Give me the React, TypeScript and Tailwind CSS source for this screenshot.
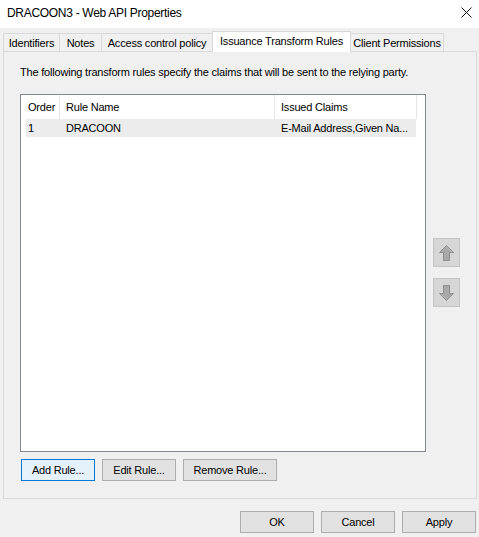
import React from "react";

const font = { fontFamily: '"Liberation Sans", Arial, sans-serif' };

function Btn({ label, w, primary }: { label: string; w: string; primary?: boolean }) {
  return (
    <div
      className={`${w} h-[22px] flex items-center justify-center border whitespace-nowrap ${
        primary ? "border-[#0078d7] bg-[#e5f1fb]" : "border-[#adadad] bg-[#e1e1e1]"
      } text-black`}
    >
      {label}
    </div>
  );
}

function Arrow({ up }: { up?: boolean }) {
  return (
    <div className="w-[27px] h-[29px] border border-[#c4c4c4] bg-[#d6d6d6] flex items-center justify-center">
      <svg width="17" height="18" viewBox="0 0 17 18" className={up ? "" : "rotate-180"}>
        <path
          d="M8.5 1.5 L15.5 8.5 L11.5 8.5 L11.5 16.5 L5.5 16.5 L5.5 8.5 L1.5 8.5 Z"
          fill="#a8a8a8"
          stroke="#8e8e8e"
          strokeWidth="1"
          strokeLinejoin="miter"
        />
        <path d="M8.5 3 L14 8" stroke="#bcbcbc" strokeWidth="1" fill="none" />
      </svg>
    </div>
  );
}

export default function App() {
  return (
    <div
      className="w-[479px] h-[537px] bg-[#f0f0f0] overflow-hidden text-[11px] leading-[16px] text-black tracking-[-0.2px]"
      style={font}
    >
      {/* Title bar */}
      <div className="h-[28px] bg-white flex items-center justify-between pl-[7px] pr-[7px]">
        <span className="text-[12px] tracking-[-0.3px] pb-[2px] whitespace-nowrap">DRACOON3 - Web API Properties</span>
        <svg width="11" height="11" viewBox="0 0 11 11" className="mb-[3px]">
          <path d="M0.5 0.5 L10.5 10.5 M10.5 0.5 L0.5 10.5" stroke="#111" strokeWidth="1" />
        </svg>
      </div>

      {/* Tabs */}
      <div className="mt-[3px] ml-[3px] flex items-end whitespace-nowrap">
        <div className="w-[56px] h-[18px] border-t border-l border-[#d9d9d9] flex items-center justify-center">
          Identifiers
        </div>
        <div className="w-[42px] h-[18px] border-t border-l border-[#d9d9d9] flex items-center justify-center">
          Notes
        </div>
        <div className="w-[111px] h-[18px] border-t border-l border-[#d9d9d9] flex items-center justify-center">
          Access control policy
        </div>
        <div className="relative z-10 w-[139px] h-[21px] mb-[-1px] border-t border-l border-r border-[#d9d9d9] bg-white flex items-center justify-center pb-[2px]">
          Issuance Transform Rules
        </div>
        <div className="w-[93px] h-[18px] border-t border-r border-[#d9d9d9] flex items-center justify-center">
          Client Permissions
        </div>
      </div>

      {/* Panel */}
      <div className="ml-[3px] w-[474px] h-[448px] border border-[#d9d9d9] flex flex-col pl-[16px]">
        <div className="mt-[12px] h-[16px] whitespace-nowrap">
          The following transform rules specify the claims that will be sent to the relying party.
        </div>

        <div className="mt-[14px] flex">
          {/* List view */}
          <div className="w-[406px] h-[358px] border border-[#828790] bg-white flex flex-col whitespace-nowrap">
            <div className="flex h-[24px]">
              <div className="w-[39px] border-r border-[#e5e5e5] flex items-center pl-[7px]">Order</div>
              <div className="w-[215px] border-r border-[#e5e5e5] flex items-center pl-[6px]">Rule Name</div>
              <div className="w-[142px] border-r border-[#e5e5e5] flex items-center pl-[6px]">Issued Claims</div>
            </div>
            <div className="ml-[5px] w-[390px] h-[18px] bg-[#ececec] flex items-center">
              <div className="w-[34px] pl-[2px]">1</div>
              <div className="w-[215px] pl-[6px]">DRACOON</div>
              <div className="flex-1 pl-[6px]">E-Mail Address,Given Na...</div>
            </div>
          </div>

          {/* Move buttons */}
          <div className="ml-[7px] pt-[144px] flex flex-col gap-[11px]">
            <Arrow up />
            <Arrow />
          </div>
        </div>

        <div className="mt-[7px] ml-[1px] flex gap-[7px]">
          <Btn label="Add Rule..." w="w-[74px]" primary />
          <Btn label="Edit Rule..." w="w-[74px]" />
          <Btn label="Remove Rule..." w="w-[94px]" />
        </div>
      </div>

      {/* Dialog buttons */}
      <div className="mt-[12px] flex justify-end gap-[7px] pr-[3px]">
        <Btn label="OK" w="w-[74px]" />
        <Btn label="Cancel" w="w-[74px]" />
        <Btn label="Apply" w="w-[74px]" />
      </div>
    </div>
  );
}
